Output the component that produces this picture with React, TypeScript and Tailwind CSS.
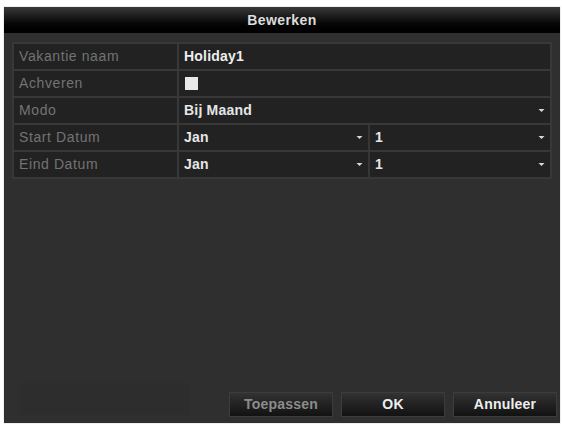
import React from "react";

const font = { fontFamily: '"Liberation Sans", Arial, sans-serif' };

function Arrow() {
  return (
    <svg width="7" height="5" viewBox="0 0 7 5" className="shrink-0">
      <path d="M0.5 1 L3.5 4 L6.5 1 Z" fill="#d8d8d8" />
    </svg>
  );
}

function Row({ label, children }: { label: string; children: React.ReactNode }) {
  return (
    <div className="flex h-[25px] gap-[2px]">
      <div className="flex w-[163px] items-center bg-[#222222] pl-[5px] text-[14px] tracking-[0.6px] text-[#737373]">
        {label}
      </div>
      <div className="flex flex-1 items-center bg-[#222222]">{children}</div>
    </div>
  );
}

function Select({ value, className = "" }: { value: string; className?: string }) {
  return (
    <div className={`flex h-full items-center justify-between pl-[5px] pr-[5px] ${className}`}>
      <span className="text-[14px] font-bold tracking-[0.2px] text-[#e6e6e6]">{value}</span>
      <Arrow />
    </div>
  );
}

function DateRow({ label }: { label: string }) {
  return (
    <Row label={label}>
      <div className="flex h-full w-full gap-[2px] bg-[#363636]">
        <Select value="Jan" className="w-[189px] bg-[#222222]" />
        <Select value="1" className="flex-1 bg-[#222222]" />
      </div>
    </Row>
  );
}

export default function App() {
  return (
    <div className="h-[426px] w-[562px] bg-white pt-[7px] pl-[4px]" style={font}>
      <div className="flex h-[416px] w-[556px] flex-col bg-[#2f2f2f] shadow-[0_0_1px_#999]">
        <div className="flex h-[26px] items-center justify-center bg-gradient-to-b from-[#3a3a3a] via-[#111111] to-[#000000] text-[14px] font-bold tracking-[0.4px] text-[#dcdcdc]">
          Bewerken
        </div>
        <div className="mx-[8px] mt-[9px] flex flex-col gap-[2px] bg-[#383838] p-[2px]">
          <Row label="Vakantie naam">
            <span className="pl-[5px] text-[14px] font-bold tracking-[0.2px] text-[#eeeeee]">Holiday1</span>
          </Row>
          <Row label="Achveren">
            <div className="ml-[6px] h-[13px] w-[13px] bg-[#e8e8e8]" />
          </Row>
          <Row label="Modo">
            <Select value="Bij Maand" className="w-full" />
          </Row>
          <DateRow label="Start Datum" />
          <DateRow label="Eind Datum" />
        </div>
        <div className="flex-1" />
        <div className="flex items-end justify-between pb-[6px] pr-[3px]">
          <div className="mb-[2px] ml-[16px] h-[32px] w-[170px] bg-[#2d2d2d]" />
          <div className="flex gap-[8px]">
            {[
              { t: "Toepassen", c: "text-[#8c8c8c]" },
              { t: "OK", c: "text-[#eeeeee]" },
              { t: "Annuleer", c: "text-[#eeeeee]" },
            ].map((b) => (
              <div
                key={b.t}
                className={`flex h-[25px] w-[104px] items-center justify-center border border-[#3c3c3c] bg-gradient-to-b from-[#333333] to-[#121212] text-[14px] font-bold tracking-[0.2px] ${b.c}`}
              >
                {b.t}
              </div>
            ))}
          </div>
        </div>
      </div>
    </div>
  );
}
